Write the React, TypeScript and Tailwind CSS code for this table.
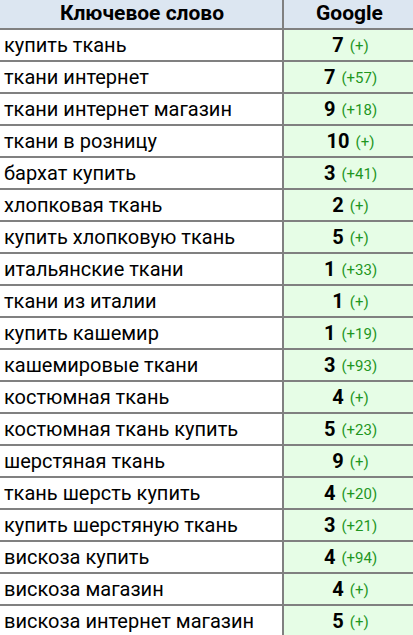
import React from "react";

const rows: [string, string, string][] = [
  ["купить ткань", "7", "(+)"],
  ["ткани интернет", "7", "(+57)"],
  ["ткани интернет магазин", "9", "(+18)"],
  ["ткани в розницу", "10", "(+)"],
  ["бархат купить", "3", "(+41)"],
  ["хлопковая ткань", "2", "(+)"],
  ["купить хлопковую ткань", "5", "(+)"],
  ["итальянские ткани", "1", "(+33)"],
  ["ткани из италии", "1", "(+)"],
  ["купить кашемир", "1", "(+19)"],
  ["кашемировые ткани", "3", "(+93)"],
  ["костюмная ткань", "4", "(+)"],
  ["костюмная ткань купить", "5", "(+23)"],
  ["шерстяная ткань", "9", "(+)"],
  ["ткань шерсть купить", "4", "(+20)"],
  ["купить шерстяную ткань", "3", "(+21)"],
  ["вискоза купить", "4", "(+94)"],
  ["вискоза магазин", "4", "(+)"],
  ["вискоза интернет магазин", "5", "(+)"],
];

export default function App() {
  return (
    <div
      className="w-[413px] h-[635px] overflow-hidden bg-white text-black"
      style={{ fontFamily: 'Roboto, "Open Sans", sans-serif' }}
    >
      <div className="flex h-[30px] border-b-2 border-[#808080] bg-[#dce6f1]">
        <div className="w-[284px] border-r-2 border-[#808080] flex items-center justify-center font-bold text-[21px] pl-[2px]">
          Ключевое слово
        </div>
        <div className="flex-1 flex items-center justify-center font-bold text-[21px] pl-[2px]">
          Google
        </div>
      </div>
      {rows.map(([kw, n, d], i) => (
        <div key={i} className="flex h-[32px] border-b-2 border-[#808080]">
          <div className="w-[284px] border-r-2 border-[#808080] flex items-center pl-[4px] text-[20px]">
            {kw}
          </div>
          <div className="flex-1 flex items-center justify-center bg-[#e6fde6] gap-[6px] pl-[4px]">
            <span className="font-bold text-[20px]">{n}</span>
            <span className="text-[15px] text-[#1f961f] mt-[3px]">{d}</span>
          </div>
        </div>
      ))}
    </div>
  );
}
